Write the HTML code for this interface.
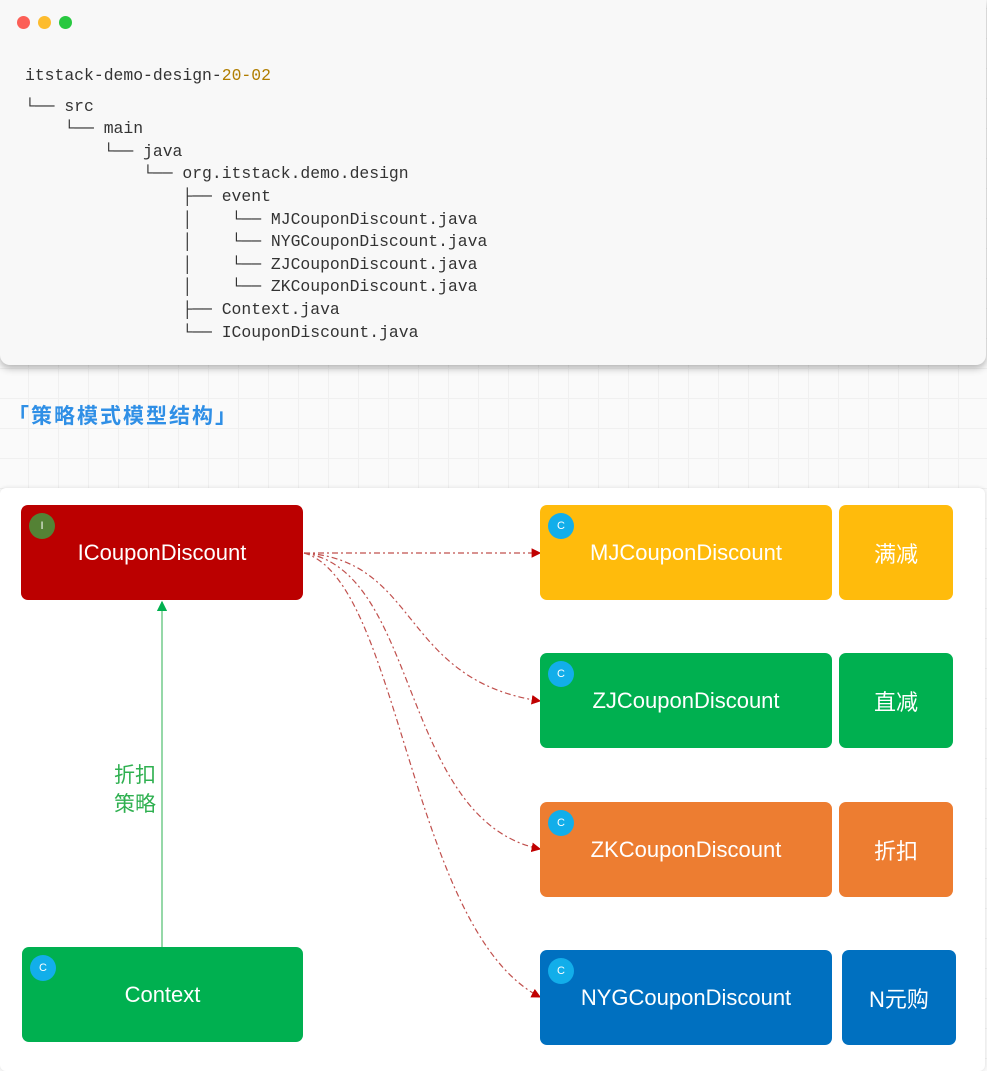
<!DOCTYPE html>
<html><head><meta charset="utf-8"><style>
body{margin:0;width:987px;height:1071px;overflow:hidden;position:relative;font-family:"Liberation Sans","Noto Sans CJK SC",sans-serif;
background-color:#fafafa;background-image:linear-gradient(#f0f0f0 1px,transparent 1px),linear-gradient(90deg,#f0f0f0 1px,transparent 1px);background-size:30px 30px;background-position:-2px 8px;}
.code{position:absolute;left:0;top:0;width:986px;height:365px;background:#f8f8f8;border-radius:0 0 10px 10px;box-shadow:0 3px 8px rgba(0,0,0,.3);}
.dot{position:absolute;top:16px;width:13px;height:13px;border-radius:50%;}
pre{position:absolute;left:25px;top:65px;margin:0;font-family:"Liberation Mono","DejaVu Sans Mono",monospace;font-size:16.4px;line-height:22.6px;color:#333;}
.y{color:#b07d00}
h2{position:absolute;left:8px;top:400px;margin:0;font-size:21px;font-weight:bold;color:#2f8fe6;letter-spacing:2px;}
.card{position:absolute;left:0;top:488px;width:985px;height:583px;background:#fff;border-radius:6px;box-shadow:0 0 4px rgba(0,0,0,.12);}
.b{position:absolute;border-radius:7px;color:#fff;font-size:22px;display:flex;align-items:center;justify-content:center;}
.c{position:absolute;left:8px;top:8px;width:26px;height:26px;border-radius:50%;background:#12aeea;font-size:11px;display:flex;align-items:center;justify-content:center;}
</style></head><body>
<div class="code">
<div class="dot" style="left:17px;background:#fc5f57"></div>
<div class="dot" style="left:38px;background:#fdbc2e"></div>
<div class="dot" style="left:59px;background:#28c840"></div>
<pre>itstack-demo-design-<span class="y">20-02</span>
<span style="display:block;height:8px"></span>└── src
    └── main
        └── java
            └── org.itstack.demo.design
                ├── event
                │    └── MJCouponDiscount.java
                │    └── NYGCouponDiscount.java
                │    └── ZJCouponDiscount.java
                │    └── ZKCouponDiscount.java
                ├── Context.java
                └── ICouponDiscount.java</pre>
</div>
<h2>「策略模式模型结构」</h2>
<div class="card"></div>
<svg style="position:absolute;left:0;top:0" width="987" height="1071">
<defs><marker id="a" markerWidth="8" markerHeight="8" refX="7" refY="4" orient="auto"><path d="M0,0 L8,4 L0,8z" fill="#c00000"/></marker>
<marker id="g" markerWidth="8" markerHeight="8" refX="7" refY="4" orient="auto"><path d="M0,0 L8,4 L0,8z" fill="#00b050"/></marker></defs>
<g fill="none" stroke="#c0504d" stroke-width="1.2" stroke-dasharray="6,3,2,3" marker-end="url(#a)">
<path d="M304,553 L540,553"/>
<path d="M304,553 C420,560 400,680 540,701"/>
<path d="M304,553 C420,570 400,820 540,849"/>
<path d="M304,553 C400,580 410,930 540,997"/>
</g>
<path d="M162,947 L162,602" stroke="#5cc27a" stroke-width="1.3" marker-end="url(#g)"/>
<text x="135" y="782" fill="#2fb050" font-size="21" text-anchor="middle" font-family="Noto Sans CJK SC,sans-serif">折扣</text>
<text x="135" y="811" fill="#2fb050" font-size="21" text-anchor="middle" font-family="Noto Sans CJK SC,sans-serif">策略</text>
</svg>
<div class="b" style="left:21px;top:505px;width:282px;height:95px;background:#bb0000"><div class="c" style="background:#548235">I</div>ICouponDiscount</div>
<div class="b" style="left:22px;top:947px;width:281px;height:95px;background:#00b050"><div class="c">C</div>Context</div>
<div class="b" style="left:540px;top:505px;width:292px;height:95px;background:#ffbb0c"><div class="c">C</div>MJCouponDiscount</div>
<div class="b" style="left:839px;top:505px;width:114px;height:95px;background:#ffbb0c">满减</div>
<div class="b" style="left:540px;top:653px;width:292px;height:95px;background:#00b050"><div class="c">C</div>ZJCouponDiscount</div>
<div class="b" style="left:839px;top:653px;width:114px;height:95px;background:#00b050">直减</div>
<div class="b" style="left:540px;top:802px;width:292px;height:95px;background:#ed7d31"><div class="c">C</div>ZKCouponDiscount</div>
<div class="b" style="left:839px;top:802px;width:114px;height:95px;background:#ed7d31">折扣</div>
<div class="b" style="left:540px;top:950px;width:292px;height:95px;background:#0070c0"><div class="c">C</div>NYGCouponDiscount</div>
<div class="b" style="left:842px;top:950px;width:114px;height:95px;background:#0070c0">N元购</div>
</body></html>
